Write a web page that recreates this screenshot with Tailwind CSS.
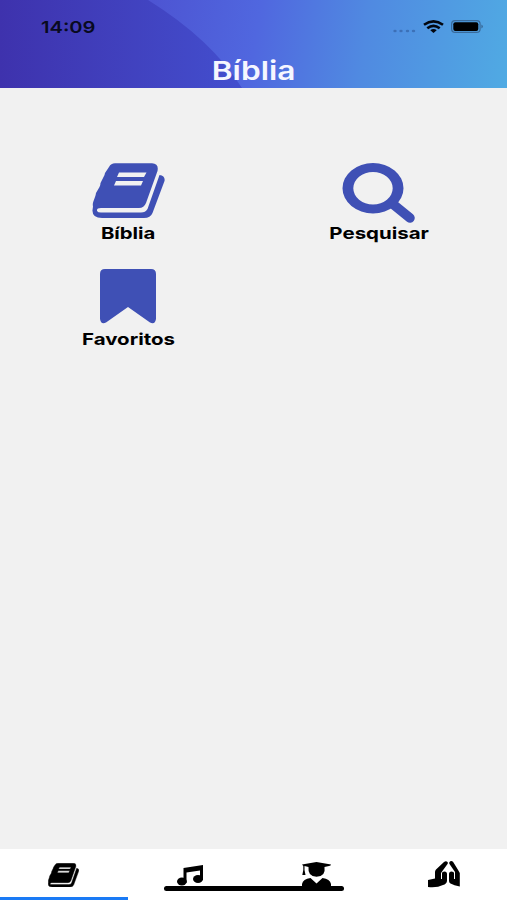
<!DOCTYPE html>
<html lang="pt-BR">
<head>
    <meta charset="UTF-8">
    <meta name="viewport" content="width=device-width, initial-scale=1.0">
    <title>Bíblia</title>
    <script src="https://cdn.jsdelivr.net/npm/@tailwindcss/browser@4"></script>
</head>
<body class="h-screen flex flex-col bg-[#f1f1f1] font-['Inter',sans-serif] overflow-hidden">
    <svg class="hidden">
        <symbol id="icon-book" viewBox="0 0 73 55" preserveAspectRatio="none">
            <path fill="currentColor" fill-rule="evenodd" d="M23 .3H60Q67 .5 65.500 8L54 40Q52 45 47 45H9Q4.500 45 5 48Q6 49.500 9 49.500H49Q53.500 49.500 55.500 46L67.500 12Q73.500 13 72.500 18L60.500 50Q58.500 55 52 55H10Q0 55 .5 47L1 43.500Q.5 41 1.200 39L3 34Q3.800 32 4 30L7.500 24Q8.500 22 8.500 20L11.500 14Q12.800 12 13 10L17 4Q19 .3 23 .3ZM27 9.500L25 14H52L54.500 9.500ZM24 18L22 22.500H49L51 18Z"/>
        </symbol>
    </svg>

    <header class="relative h-[88px] shrink-0 flex flex-col overflow-hidden bg-linear-to-r from-[#3e32ad] via-[#4350d0] via-50% to-[#4b9fe0]">
        <svg class="absolute inset-0" width="507" height="88" viewBox="0 0 507 88">
            <defs>
                <linearGradient id="header-shade" gradientUnits="userSpaceOnUse" x1="150" y1="0" x2="510" y2="60">
                    <stop offset="0" stop-color="#4d54d2"/>
                    <stop offset=".3" stop-color="#5067df"/>
                    <stop offset=".6" stop-color="#508ae1"/>
                    <stop offset="1" stop-color="#50aae3"/>
                </linearGradient>
            </defs>
            <path fill="url(#header-shade)" d="M148 0Q211 39 242 88H507V0Z"/>
        </svg>
        <div class="relative h-[55px] flex items-center justify-between pl-[41px] pr-[23px]">
            <span class="mt-px origin-left scale-x-[1.22] text-[16.5px] leading-5 font-semibold text-[#080a20]">14:09</span>
            <div class="flex items-center">
                <svg class="mr-[7px] mt-[9px]" width="23" height="4" viewBox="0 0 23 4" fill="#315d9f" fill-opacity=".65">
                    <ellipse cx="2" cy="2" rx="1.700" ry="1.300"/>
                    <ellipse cx="8" cy="2" rx="1.700" ry="1.300"/>
                    <ellipse cx="14.500" cy="2" rx="1.700" ry="1.300"/>
                    <ellipse cx="20.500" cy="2" rx="1.700" ry="1.300"/>
                </svg>
                <svg class="mr-[7px]" width="21" height="13" viewBox="0 0 21 13" fill="none" stroke="#03070f" stroke-width="2.600">
                    <path d="M1 4.800Q10.500-2 20 4.800"/>
                    <path d="M4.300 8.300Q10.500 3.400 16.700 8.300"/>
                    <path d="M7.300 10.300Q10.500 7.500 13.700 10.300L10.500 13Z" fill="#03070f" stroke="none"/>
                </svg>
                <svg width="33" height="13" viewBox="0 0 33 13">
                    <rect x=".6" y=".6" width="28.500" height="11.800" rx="3.500" fill="none" stroke="#315a84" stroke-opacity=".75" stroke-width="1.200"/>
                    <rect x="2.300" y="2.200" width="25" height="8.800" rx="2" fill="#000"/>
                    <path d="M30.500 4.500Q33 6.500 30.500 8.500Z" fill="#315a84"/>
                </svg>
            </div>
        </div>
        <h1 class="relative self-center mt-px scale-x-[1.21] text-[26.2px] leading-[34px] font-semibold text-[#f5f6ff]">Bíblia</h1>
    </header>

    <main class="flex-1 grid grid-cols-2 content-start gap-y-[24px] px-[3px] pt-[75px]">
        <a class="h-[82px] flex flex-col items-center text-[#3f50b5]">
            <svg width="73" height="55"><use href="#icon-book"/></svg>
            <span class="mt-[4px] scale-x-[1.23] text-[16.5px] leading-[22px] font-bold text-black">Bíblia</span>
        </a>
        <a class="h-[82px] flex flex-col items-center">
            <svg width="73" height="60" viewBox="0 0 73 60" fill="none" stroke="#3f50b5">
                <path d="M52 42L68 55" stroke-width="9.500" stroke-linecap="round"/>
                <path fill="#3f50b5" fill-rule="evenodd" stroke="none" d="M31 0A30.500 25.200 0 1 0 31 50.400A30.500 25.200 0 1 0 31 0ZM31 9A19.700 16.300 0 1 1 31 41.600A19.700 16.300 0 1 1 31 9Z"/>
            </svg>
            <span class="-mt-px scale-x-[1.24] text-[16.5px] leading-[22px] font-bold text-black">Pesquisar</span>
        </a>
        <a class="h-[82px] flex flex-col items-center">
            <svg width="56" height="55" viewBox="0 0 56 55" fill="#3f50b5">
                <path d="M5 0H51Q56 0 56 5V50Q55 56 50 53.500L28 38L6 53.500Q1 56 0 50V5Q0 0 5 0Z"/>
            </svg>
            <span class="mt-[4px] scale-x-[1.24] text-[16.5px] leading-[22px] font-bold text-black">Favoritos</span>
        </a>
    </main>

    <nav class="relative h-[51px] shrink-0 grid grid-cols-4 bg-white text-black">
        <a class="flex justify-center pt-[14px] -mr-px border-b-[3px] border-[#1a7af5]">
            <svg width="31" height="24"><use href="#icon-book" stroke="currentColor" stroke-width="1"/></svg>
        </a>
        <a class="flex justify-center pt-[16px]">
            <svg width="26" height="21" viewBox="0 0 26 21">
                <path d="M6.500 3L26 0V15H23V5.500L9.500 7.500V18H6.500Z"/>
                <ellipse cx="4.900" cy="16.500" rx="4.900" ry="4"/>
                <ellipse cx="21" cy="14" rx="5" ry="4"/>
            </svg>
        </a>
        <a class="flex justify-center pt-[13px]">
            <svg width="29" height="26" viewBox="0 0 29 26">
                <path d="M0 2.500L14.500 0L29 2.500Q29 3.500 27 4L22.500 5Q24 14.500 14.500 14.800Q5.500 14.500 6.500 5L2.500 4V8L3.500 13H.3L1.300 8V4Z"/>
                <path d="M0 26V22Q1 17 8.500 16L14.500 21.500L20.500 16Q28 17 29 22V26Z"/>
            </svg>
        </a>
        <a class="flex justify-center pt-[12px]">
            <svg width="32" height="27" viewBox="0 0 32 27">
                <path d="M16 1Q18-.5 19.500 1Q20.200 2 19.500 3L13 12V18H14V12Q14 10.500 16.500 10.500Q19 10.500 19 13V20Q18.500 23 15 24Q9 27 0 26V19L7 17.500V11Q7 9.500 8 8.500Z"/>
                <path d="M21.500 1Q23-.8 25 .8L29.500 8L31.800 12V25.500Q26 24.500 22.500 22.500Q21 21.500 21 20V13Q21 10.500 23.500 10.500Q26 10.500 26 12V18H27V11L21.500 3Q21 2 21.500 1Z"/>
            </svg>
        </a>
        <div class="absolute left-[164px] top-[37px] w-[180px] h-[5px] rounded-full bg-black"></div>
    </nav>
</body>
</html>
